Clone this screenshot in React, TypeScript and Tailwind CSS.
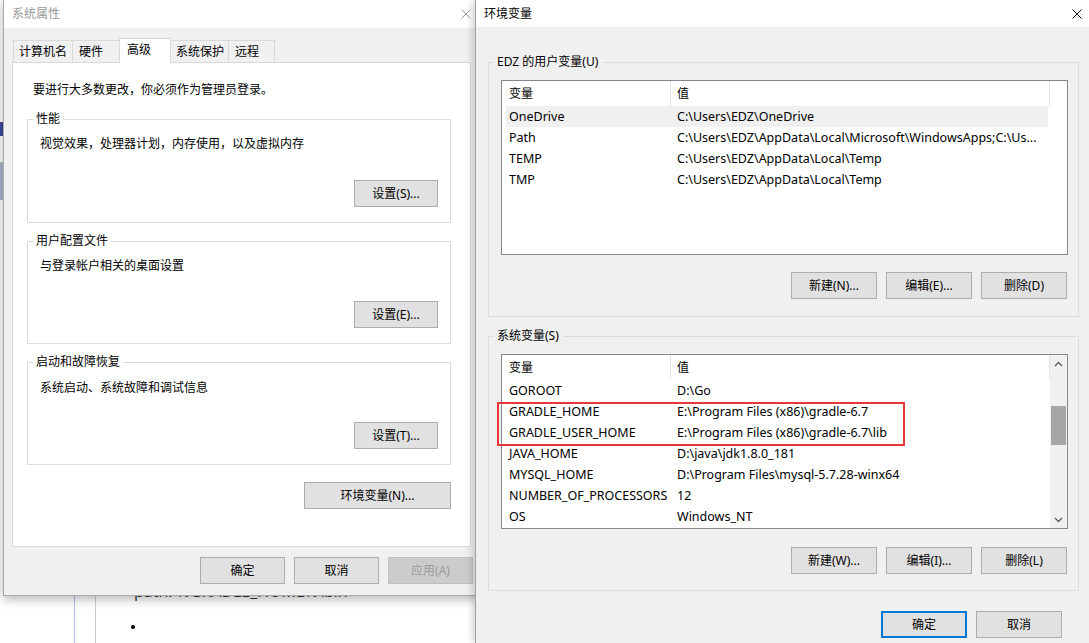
import React from 'react';

const ui = "font-[family-name:'Noto_Sans','Noto_Sans_CJK_SC',sans-serif] text-[12px] leading-[16px] text-black";

function CloseX({ color }: { color: string }) {
  return (
    <svg width="10" height="10" viewBox="0 0 10 10" className="block">
      <path d="M0.5 0.5 L9.5 9.5 M9.5 0.5 L0.5 9.5" stroke={color} strokeWidth="1" fill="none" />
    </svg>
  );
}

function Btn({
  label,
  size = 'w-[86px] h-[27px]',
  focused = false,
  disabled = false,
}: {
  label: string;
  size?: string;
  focused?: boolean;
  disabled?: boolean;
}) {
  let tone = 'border border-[#adadad] bg-[#e1e1e1] text-black';
  if (focused) tone = 'border-2 border-[#0078d7] bg-[#e1e1e1] text-black';
  if (disabled) tone = 'border border-[#bfbfbf] bg-[#cccccc] text-[#9a9a9a]';
  return (
    <div className={`${size} ${tone} shrink-0 flex items-center justify-center whitespace-nowrap`}>
      {label}
    </div>
  );
}

// 左侧“系统属性”里的分组框
function SysGroup({ title, desc, btn, descGap, btnGap, first }: {
  title: string; desc: string; btn: string; descGap: string; btnGap: string; first?: boolean;
}) {
  return (
    <fieldset className={`border border-[#dcdcdc] pb-[15px] ${first ? 'mt-[13px]' : 'mt-[10px]'}`}>
      <legend className="ml-[5px] px-[3px] leading-[16px]">{title}</legend>
      <div className={`pl-[12px] ${descGap}`}>{desc}</div>
      <div className={`flex justify-end mr-[12px] ${btnGap}`}>
        <Btn label={btn} size="w-[84px] h-[27px]" />
      </div>
    </fieldset>
  );
}

type Row = { name: string; value: string; selected?: boolean };

const userVars: Row[] = [
  { name: 'OneDrive', value: 'C:\\Users\\EDZ\\OneDrive', selected: true },
  { name: 'Path', value: 'C:\\Users\\EDZ\\AppData\\Local\\Microsoft\\WindowsApps;C:\\Us...' },
  { name: 'TEMP', value: 'C:\\Users\\EDZ\\AppData\\Local\\Temp' },
  { name: 'TMP', value: 'C:\\Users\\EDZ\\AppData\\Local\\Temp' },
];

const sysVars: Row[] = [
  { name: 'GOROOT', value: 'D:\\Go' },
  { name: 'GRADLE_HOME', value: 'E:\\Program Files (x86)\\gradle-6.7' },
  { name: 'GRADLE_USER_HOME', value: 'E:\\Program Files (x86)\\gradle-6.7\\lib' },
  { name: 'JAVA_HOME', value: 'D:\\java\\jdk1.8.0_181' },
  { name: 'MYSQL_HOME', value: 'D:\\Program Files\\mysql-5.7.28-winx64' },
  { name: 'NUMBER_OF_PROCESSORS', value: '12' },
  { name: 'OS', value: 'Windows_NT' },
];

function VarTable({ rows }: { rows: Row[] }) {
  return (
    <div className="flex-1 min-w-0 overflow-hidden">
      <div className="flex h-[25px] items-stretch">
        <div className="w-[168px] pl-[7px] flex items-center">变量</div>
        <div className="w-[379px] border-l border-[#e5e5e5] pl-[6px] flex items-center">值</div>
        <div className="w-px bg-[#e5e5e5]" />
      </div>
      {rows.map((r) => (
        <div
          key={r.name}
          className={`ml-[4px] w-[542px] h-[21px] flex items-center whitespace-nowrap text-[12.5px] ${r.selected ? 'bg-[#f0f0f0]' : ''}`}
        >
          <div className="w-[164px] pl-[3px] overflow-hidden">{r.name}</div>
          <div className="flex-1 pl-[7px] overflow-hidden">{r.value}</div>
        </div>
      ))}
    </div>
  );
}

function Chevron({ up }: { up?: boolean }) {
  return (
    <svg width="9" height="6" viewBox="0 0 9 6" className="block">
      <path d={up ? 'M1 5 L4.5 1.5 L8 5' : 'M1 1 L4.5 4.5 L8 1'} stroke="#606060" strokeWidth="1.4" fill="none" />
    </svg>
  );
}

function EnvGroup({ title, rows, buttons, scroll, listGap, btnGap, pb, className }: {
  title: string; rows: Row[]; buttons: string[]; scroll?: boolean; listGap: string; btnGap: string; pb: string; className: string;
}) {
  return (
    <fieldset className={`border border-[#dcdcdc] ${pb} ${className}`}>
      <legend className="ml-[4px] px-[4px] leading-[16px]">{title}</legend>
      <div className={`ml-[12px] mr-[10px] ${listGap} h-[175px] border border-[#828790] bg-white flex overflow-hidden`}>
        <VarTable rows={rows} />
        {scroll && (
          <div className="w-[17px] shrink-0 bg-[#f0f0f0] flex flex-col">
            <div className="h-[17px] flex items-center justify-center">
              <Chevron up />
            </div>
            <div className="flex-1">
              <div className="mt-[34px] mx-[1px] h-[39px] bg-[#a6a6a6]" />
            </div>
            <div className="h-[17px] flex items-center justify-center">
              <Chevron />
            </div>
          </div>
        )}
      </div>
      <div className={`flex justify-end gap-[9px] mr-[11px] ${btnGap}`}>
        {buttons.map((b) => (
          <Btn key={b} label={b} />
        ))}
      </div>
    </fieldset>
  );
}

export default function App() {
  return (
    <div className={`relative w-[1089px] h-[643px] overflow-hidden bg-white ${ui}`}>
      {/* 背后的网页 */}
      <div className="flex h-full">
        <div className="w-[3px] shrink-0 pt-[122px]">
          <div className="h-[14px] w-[3px] bg-[#3a4a9a]" />
          <div className="mt-[26px] h-[38px] w-[3px] bg-[#aab6cc]" />
        </div>
        <div className="w-[71px] shrink-0" />
        <div className="w-[21px] shrink-0 border-l border-[#a8c0ea]" />
        <div className="flex-1 border-l border-[#cccccc] pl-[34px] pt-[579px] font-[family-name:'Open_Sans','Noto_Sans_CJK_SC',sans-serif] text-[16px] leading-[24px] text-[#333333]">
          <div className="pl-[4px]">path: %GRADLE_HOME%\bin</div>
          <div className="mt-[22px] ml-[1px] w-[4px] h-[4px] rounded-full bg-black" />
        </div>
      </div>

      {/* 系统属性 */}
      <div className="absolute left-[3px] top-[-1px] w-[478px] h-[597px] border border-[#aaaaaa] bg-[#f0f0f0] shadow-[0_3px_10px_rgba(0,0,0,0.3)] flex flex-col">
        <div className="h-[28px] shrink-0 bg-white flex items-center justify-between pl-[8px] pr-[9px] text-[#999999]">
          <span>系统属性</span>
          <CloseX color="#999999" />
        </div>
        <div className="ml-[8px] mr-[9px] mt-[10px]">
          <div className="flex items-end h-[25px] ml-[1px] -mb-[1px] relative z-10">
            <div className="w-[60px] h-[22px] mb-[1px] border border-b-0 border-[#d9d9d9] pl-[5px] flex items-center">计算机名</div>
            <div className="w-[48px] h-[22px] mb-[1px] -ml-[1px] border border-b-0 border-[#d9d9d9] pl-[6px] flex items-center">硬件</div>
            <div className="w-[52px] h-[25px] -ml-[1px] border border-b-0 border-[#d9d9d9] bg-white pl-[7px] pb-[2px] flex items-center relative z-10">高级</div>
            <div className="w-[59px] h-[22px] mb-[1px] -ml-[1px] border border-b-0 border-[#d9d9d9] pl-[5px] flex items-center">系统保护</div>
            <div className="w-[47px] h-[22px] mb-[1px] -ml-[1px] border border-b-0 border-[#d9d9d9] pl-[6px] flex items-center">远程</div>
          </div>
          <div className="h-[485px] border border-[#d9d9d9] bg-white pl-[14px] pr-[19px] pt-[19px]">
            <div className="ml-[6px]">要进行大多数更改，你必须作为管理员登录。</div>
            <SysGroup first title="性能" desc="视觉效果，处理器计划，内存使用，以及虚拟内存" btn="设置(S)..." descGap="mt-[9px]" btnGap="mt-[28px]" />
            <SysGroup title="用户配置文件" desc="与登录帐户相关的桌面设置" btn="设置(E)..." descGap="mt-[9px]" btnGap="mt-[27px]" />
            <SysGroup title="启动和故障恢复" desc="系统启动、系统故障和调试信息" btn="设置(T)..." descGap="mt-[10px]" btnGap="mt-[26px]" />
            <div className="flex justify-end mt-[17px]">
              <Btn label="环境变量(N)..." size="w-[147px] h-[27px]" />
            </div>
          </div>
        </div>
        <div className="flex justify-end gap-[9px] mt-[10px] mr-[7px]">
          <Btn label="确定" size="w-[85px] h-[27px]" />
          <Btn label="取消" size="w-[85px] h-[27px]" />
          <Btn label="应用(A)" size="w-[85px] h-[27px]" disabled />
        </div>
      </div>

      {/* 环境变量 */}
      <div className="absolute left-[475px] top-0 w-[614px] h-[643px] border-l border-[#a0a0a0] bg-[#f0f0f0] shadow-[-2px_0_8px_rgba(0,0,0,0.2)] flex flex-col">
        <div className="h-[27px] shrink-0 bg-white flex items-center justify-between pl-[8px] pr-[7px]">
          <span>环境变量</span>
          <CloseX color="#000000" />
        </div>
        <div className="pl-[12px] pr-[10px] pt-[27px]">
          <EnvGroup
            title="EDZ 的用户变量(U)"
            rows={userVars}
            buttons={['新建(N)...', '编辑(E)...', '删除(D)']}
            listGap="mt-[10px]"
            btnGap="mt-[17px]"
            pb="pb-[17px]"
            className=""
          />
          <EnvGroup
            title="系统变量(S)"
            rows={sysVars}
            buttons={['新建(W)...', '编辑(I)...', '删除(L)']}
            scroll
            listGap="mt-[10px]"
            btnGap="mt-[18px]"
            pb="pb-[16px]"
            className="mt-[11px]"
          />
          <div className="flex justify-end gap-[9px] mt-[20px] mr-[17px]">
            <Btn label="确定" focused />
            <Btn label="取消" />
          </div>
        </div>
        {/* 红色标注框 */}
        <div className="absolute left-[21px] top-[402px] w-[408px] h-[44px] border-2 border-[#e8363a]" />
      </div>
    </div>
  );
}
